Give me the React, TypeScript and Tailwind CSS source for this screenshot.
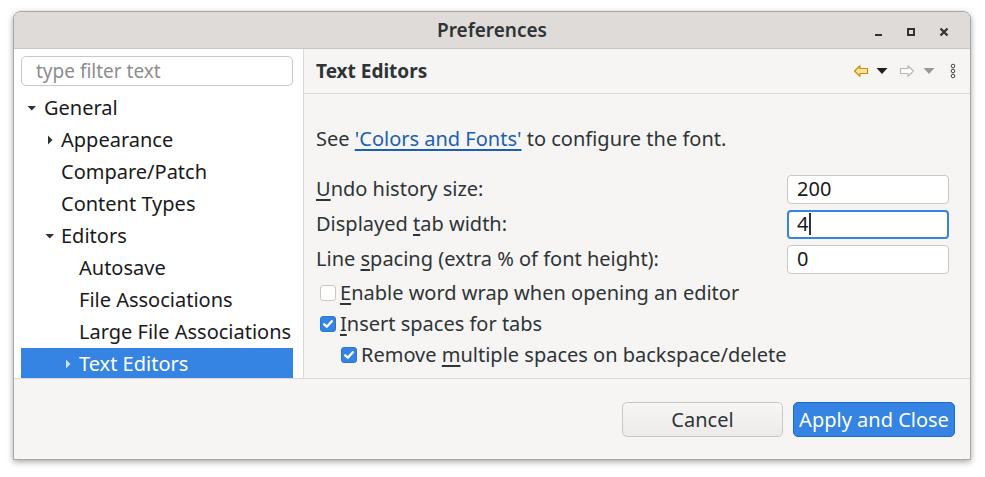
import React from "react";

const Tri = ({ dir, color = "#2e3436" }: { dir: "down" | "right"; color?: string }) =>
  dir === "down" ? (
    <svg width="10" height="10" viewBox="0 0 10 10" className="shrink-0">
      <path d="M0.5 3 L9 3 L4.75 7.5 Z" fill={color} />
    </svg>
  ) : (
    <svg width="10" height="10" viewBox="0 0 10 10" className="shrink-0">
      <path d="M3 0.5 L7.5 5 L3 9.5 Z" fill={color} />
    </svg>
  );

const TreeRow = ({
  level,
  label,
  tri,
  selected,
}: {
  level: number;
  label: string;
  tri?: "down" | "right";
  selected?: boolean;
}) => {
  const pads = ["pl-[6px]", "pl-[24px]", "pl-[42px]"];
  return (
    <div
      className={`h-[32px] shrink-0 flex items-center ${pads[level]} ${
        selected ? "bg-[#3584e4] text-white" : "text-[#1a1a1a]"
      }`}
    >
      <div className={`w-[10px] flex items-center justify-start ${level === 0 ? "mr-[7px]" : "mr-[6px]"}`}>
        {tri && <Tri dir={tri} color={selected ? "#c9dcf6" : "#2e3436"} />}
      </div>
      <span className="whitespace-nowrap">{label}</span>
    </div>
  );
};

const Check = ({ checked }: { checked: boolean }) =>
  checked ? (
    <div className="w-[16px] h-[16px] rounded-[3px] bg-[#3584e4] border border-[#2a76d6] flex items-center justify-center shrink-0">
      <svg width="12" height="12" viewBox="0 0 11 11">
        <path d="M2 5.8 L4.4 8 L9 3" stroke="white" strokeWidth="2.2" fill="none" strokeLinecap="round" strokeLinejoin="round" />
      </svg>
    </div>
  ) : (
    <div className="w-[16px] h-[16px] rounded-[3px] bg-white border border-[#cdc7c2] shrink-0" />
  );

const Field = ({ value, focused }: { value: string; focused?: boolean }) => (
  <div
    className={`w-[162px] h-[29px] rounded-[4px] bg-white flex items-center ${
      focused ? "border-2 border-[#3584e4] pl-[8px]" : "border border-[#cdc7c2] pl-[9px]"
    }`}
  >
    <span className="text-[#1a1a1a]">{value}</span>
    {focused && <span className="w-[2px] h-[22px] bg-[#2e3436] ml-[1px]" />}
  </div>
);

export default function App() {
  return (
    <div
      className="w-[985px] h-[477px] bg-white relative"
      style={{ fontFamily: '"Noto Sans", sans-serif' }}
    >
      <div className="absolute left-[13px] top-[11px] w-[958px] h-[449px] rounded-t-[8px] border border-[#a8a5a2] bg-[#f6f5f4] shadow-[0_2px_6px_rgba(0,0,0,0.35)] flex flex-col overflow-hidden">
        {/* Title bar */}
        <div className="h-[37px] shrink-0 bg-[#dedbd8] border-b border-[#c9c5c1] flex items-center relative">
          <div className="flex-1 text-center text-[19px] font-semibold text-[#2e3436] leading-none pt-[1px]">
            Preferences
          </div>
          <div className="absolute right-[10px] top-0 h-full flex items-center gap-[0px]">
            <div className="w-[32px] h-full flex items-center justify-center">
              <div className="w-[7px] h-[2px] bg-[#2e3436] mt-[10px]" />
            </div>
            <div className="w-[34px] h-full flex items-center justify-center">
              <div className="w-[8px] h-[8px] border-2 border-[#2e3436] mt-[3px]" />
            </div>
            <div className="w-[32px] h-full flex items-center justify-center">
              <svg width="10" height="10" viewBox="0 0 10 10" className="mt-[3px]">
                <path d="M1.5 1.5 L8.5 8.5 M8.5 1.5 L1.5 8.5" stroke="#2e3436" strokeWidth="2.2" />
              </svg>
            </div>
          </div>
        </div>

        {/* Body */}
        <div className="h-[329px] shrink-0 flex">
          {/* Left */}
          <div className="w-[290px] shrink-0 bg-white border-r border-[#dcd8d4] flex flex-col pl-[7px] pr-[10px] pt-[7px] overflow-hidden">
            <div className="h-[30px] shrink-0 rounded-[5px] border border-[#cdc7c2] bg-white flex items-center pl-[14px] text-[19px] text-[#8b8e8f]">
              type filter text
            </div>
            <div className="mt-[6px] flex flex-col text-[20px]">
              <TreeRow level={0} label="General" tri="down" />
              <TreeRow level={1} label="Appearance" tri="right" />
              <TreeRow level={1} label="Compare/Patch" />
              <TreeRow level={1} label="Content Types" />
              <TreeRow level={1} label="Editors" tri="down" />
              <TreeRow level={2} label="Autosave" />
              <TreeRow level={2} label="File Associations" />
              <TreeRow level={2} label="Large File Associations" />
              <TreeRow level={2} label="Text Editors" tri="right" selected />
            </div>
          </div>

          {/* Right */}
          <div className="flex-1 flex flex-col">
            <div className="h-[45px] shrink-0 border-b border-[#dcd8d4] flex items-center pl-[12px] pr-[14px]">
              <span className="text-[19px] font-bold text-[#2e3436]">Text Editors</span>
              <div className="ml-auto flex items-center">
                <svg width="16" height="14" viewBox="0 0 16 14">
                  <path d="M1.5 7 L7 1.8 L7 4.5 L14.5 4.5 L14.5 9.5 L7 9.5 L7 12.2 Z" fill="#fbe79a" stroke="#d08a0a" strokeWidth="1.2" strokeLinejoin="round" />
                </svg>
                <svg width="12" height="8" viewBox="0 0 12 8" className="ml-[7px]">
                  <path d="M0.5 1 L11.5 1 L6 7 Z" fill="#1f1f1f" />
                </svg>
                <svg width="16" height="14" viewBox="0 0 16 14" className="ml-[11px]">
                  <path d="M14.5 7 L9 1.8 L9 4.5 L1.5 4.5 L1.5 9.5 L9 9.5 L9 12.2 Z" fill="#ffffff" stroke="#b8b8b8" strokeWidth="1.2" strokeLinejoin="round" />
                </svg>
                <svg width="12" height="8" viewBox="0 0 12 8" className="ml-[8px]">
                  <path d="M0.5 1 L11.5 1 L6 7 Z" fill="#9a9a9a" />
                </svg>
                <svg width="6" height="16" viewBox="0 0 6 16" className="ml-[15px]">
                  <circle cx="3" cy="3" r="1.8" fill="none" stroke="#444" strokeWidth="1" />
                  <circle cx="3" cy="8" r="1.8" fill="none" stroke="#444" strokeWidth="1" />
                  <circle cx="3" cy="13" r="1.8" fill="none" stroke="#444" strokeWidth="1" />
                </svg>
              </div>
            </div>

            <div className="flex-1 flex flex-col pl-[12px] pr-[21px] text-[20px] text-[#2e3436]">
              <div className="h-[32px] mt-[29px] flex items-center whitespace-nowrap">
                See&nbsp;
                <span className="text-[#1a5fb4] underline underline-offset-[3px]">'Colors and Fonts'</span>
                &nbsp;to configure the font.
              </div>
              <div className="mt-[19px] flex flex-col gap-[5px]">
                <div className="flex items-center justify-between">
                  <span>
                    <span className="underline underline-offset-[3px]">U</span>ndo history size:
                  </span>
                  <Field value="200" />
                </div>
                <div className="flex items-center justify-between">
                  <span>
                    Displayed <span className="underline underline-offset-[3px]">t</span>ab width:
                  </span>
                  <Field value="4" focused />
                </div>
                <div className="flex items-center justify-between">
                  <span>
                    Line <span className="underline underline-offset-[3px]">s</span>pacing (extra % of font height):
                  </span>
                  <Field value="0" />
                </div>
              </div>
              <div className="flex flex-col mt-[3px]">
                <div className="h-[31px] flex items-center pl-[4px] gap-[4px]">
                  <Check checked={false} />
                  <span className="whitespace-nowrap">
                    <span className="underline underline-offset-[3px]">E</span>nable word wrap when opening an editor
                  </span>
                </div>
                <div className="h-[31px] flex items-center pl-[4px] gap-[4px]">
                  <Check checked />
                  <span className="whitespace-nowrap">
                    <span className="underline underline-offset-[3px]">I</span>nsert spaces for tabs
                  </span>
                </div>
                <div className="h-[31px] flex items-center pl-[25px] gap-[4px]">
                  <Check checked />
                  <span className="whitespace-nowrap">
                    Remove <span className="underline underline-offset-[3px]">m</span>ultiple spaces on backspace/delete
                  </span>
                </div>
              </div>
            </div>
          </div>
        </div>

        {/* Footer */}
        <div className="flex-1 border-t border-[#dcd8d4] bg-[#f6f5f4] flex items-start justify-end pr-[15px] pt-[23px] gap-[10px]">
          <div className="w-[161px] h-[35px] rounded-[5px] border border-[#cdc7c2] bg-gradient-to-b from-[#f7f6f5] to-[#edebe9] flex items-center justify-center text-[20px] text-[#2e3436]">
            Cancel
          </div>
          <div className="w-[162px] h-[35px] rounded-[5px] border border-[#1b6acb] bg-[#3584e4] flex items-center justify-center text-[20px] text-white">
            Apply and Close
          </div>
        </div>
      </div>
    </div>
  );
}
